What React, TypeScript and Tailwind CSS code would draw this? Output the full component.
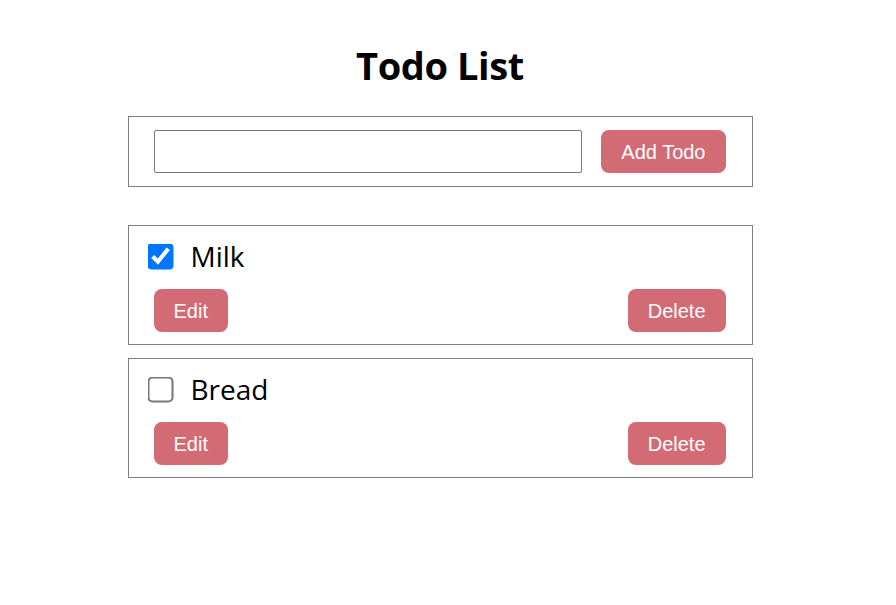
import React from 'react';

type Todo = { id: number; text: string; done: boolean };

const btn =
  'h-[43px] rounded-[8px] bg-[#d36b75] px-[20px] text-[20px] text-white font-["Liberation_Sans",Arial,sans-serif]';

export default function App() {
  const [todos, setTodos] = React.useState<Todo[]>([
    { id: 1, text: 'Milk', done: true },
    { id: 2, text: 'Bread', done: false },
  ]);
  const [value, setValue] = React.useState('');

  function toggle(id: number) {
    setTodos((t) => t.map((x) => (x.id === id ? { ...x, done: !x.done } : x)));
  }

  return (
    <div className="min-h-[605px] w-full bg-white">
      <div className="w-[880px] flex flex-col items-center pt-[37px]">
        <h1 className='text-[38px] leading-[56px] font-bold text-black font-["Open_Sans","Noto_Sans",sans-serif] tracking-[-0.4px]'>
          Todo List
        </h1>

        <div className="mt-[23px] w-[625px] border border-[#808080] flex items-center justify-between pl-[25px] pr-[26px] py-[13px]">
          <input
            type="text"
            value={value}
            onChange={(e) => setValue(e.target.value)}
            className="w-[428px] h-[43px] border border-[#767676] rounded-[2px] outline-none px-2"
          />
          <button className={btn}>Add Todo</button>
        </div>

        <div className="mt-[38px] flex flex-col gap-[13px]">
          {todos.map((todo) => (
            <div key={todo.id} className="w-[625px] h-[120px] border border-[#808080] pt-[11px]">
              <div className="h-[38px] flex items-center pl-[19px]">
                <span className="w-[26px] h-[26px] flex items-center justify-center">
                  <input
                    type="checkbox"
                    checked={todo.done}
                    onChange={() => toggle(todo.id)}
                    className="w-[13px] h-[13px] m-0 scale-[2] accent-[#0075ff]"
                  />
                </span>
                <span className='ml-[17px] text-[28px] leading-[38px] text-black font-["Open_Sans","Noto_Sans",sans-serif]'>
                  {todo.text}
                </span>
              </div>
              <div className="mt-[14px] flex justify-between pl-[25px] pr-[26px]">
                <button className={btn}>Edit</button>
                <button className={btn}>Delete</button>
              </div>
            </div>
          ))}
        </div>
      </div>
    </div>
  );
}
